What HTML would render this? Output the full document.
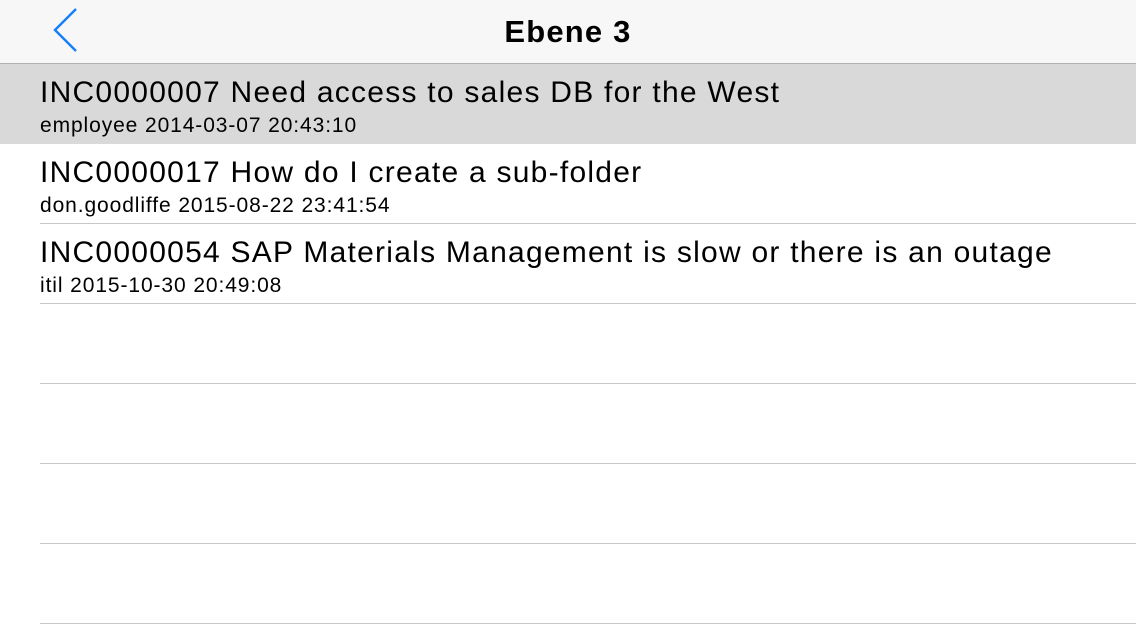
<!DOCTYPE html>
<html><head><meta charset="utf-8"><style>
body{margin:0;width:1136px;height:640px;overflow:hidden;background:#fff;font-family:"Liberation Sans",sans-serif;position:relative}
.nav{position:absolute;left:0;top:0;width:1136px;height:64px;background:#f7f7f7;border-bottom:1px solid #b2b2b2;box-sizing:border-box}
.nav .t{position:absolute;left:0;right:0;top:14px;text-align:center;font-weight:bold;font-size:31px;letter-spacing:1.2px;color:#000}
.row{position:absolute;left:0;width:1136px;height:80px}
.row .a{position:absolute;left:40px;top:12px;font-size:30px;color:#000;white-space:nowrap;letter-spacing:1.25px}
.row .b{position:absolute;left:40px;top:50px;font-size:21px;color:#000;white-space:nowrap;letter-spacing:0.9px}
.sep{position:absolute;left:40px;right:0;height:1px;background:#c8c7cc}
</style></head><body>
<div class="nav"><svg style="position:absolute;left:50px;top:6px" width="30" height="48"><polyline points="26,3 5,24 26,45" fill="none" stroke="#147efb" stroke-width="2.4"/></svg><div class="t">Ebene 3</div></div>
<div class="row" style="top:64px;background:#d9d9d9"><div class="a">INC0000007 Need access to sales DB for the West</div><div class="b">employee 2014-03-07 20:43:10</div></div>
<div class="row" style="top:144px"><div class="a">INC0000017 How do I create a sub-folder</div><div class="b">don.goodliffe 2015-08-22 23:41:54</div></div>
<div class="sep" style="top:223px"></div>
<div class="row" style="top:224px"><div class="a">INC0000054 SAP Materials Management is slow or there is an outage</div><div class="b">itil 2015-10-30 20:49:08</div></div>
<div class="sep" style="top:303px"></div>
<div class="sep" style="top:383px"></div>
<div class="sep" style="top:463px"></div>
<div class="sep" style="top:543px"></div>
<div class="sep" style="top:623px"></div>
</body></html>
